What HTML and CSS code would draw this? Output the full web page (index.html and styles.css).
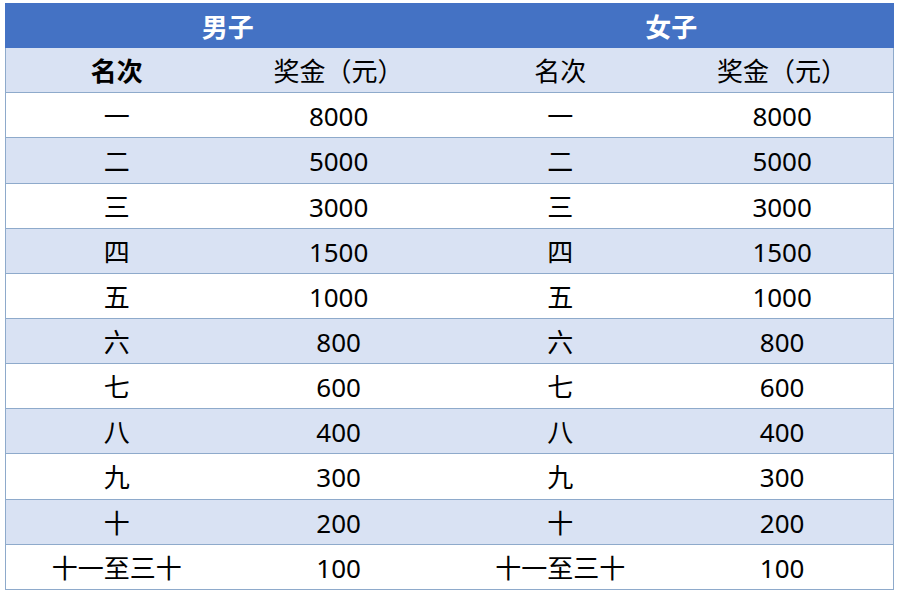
FILE: index.html
```html
<!DOCTYPE html>
<html lang="zh">
<head>
<meta charset="utf-8">
<link rel="stylesheet" href="styles.css">
</head>
<body>
<div class="table">
  <div class="row head">
    <div class="cell span2">男子</div>
    <div class="cell span2">女子</div>
  </div>
  <div class="row sub">
    <div class="cell bold">名次</div>
    <div class="cell">奖金（元）</div>
    <div class="cell">名次</div>
    <div class="cell">奖金（元）</div>
  </div>
  <div class="row"><div class="cell">一</div><div class="cell">8000</div><div class="cell">一</div><div class="cell">8000</div></div>
  <div class="row alt"><div class="cell">二</div><div class="cell">5000</div><div class="cell">二</div><div class="cell">5000</div></div>
  <div class="row"><div class="cell">三</div><div class="cell">3000</div><div class="cell">三</div><div class="cell">3000</div></div>
  <div class="row alt"><div class="cell">四</div><div class="cell">1500</div><div class="cell">四</div><div class="cell">1500</div></div>
  <div class="row"><div class="cell">五</div><div class="cell">1000</div><div class="cell">五</div><div class="cell">1000</div></div>
  <div class="row alt"><div class="cell">六</div><div class="cell">800</div><div class="cell">六</div><div class="cell">800</div></div>
  <div class="row"><div class="cell">七</div><div class="cell">600</div><div class="cell">七</div><div class="cell">600</div></div>
  <div class="row alt"><div class="cell">八</div><div class="cell">400</div><div class="cell">八</div><div class="cell">400</div></div>
  <div class="row"><div class="cell">九</div><div class="cell">300</div><div class="cell">九</div><div class="cell">300</div></div>
  <div class="row alt"><div class="cell">十</div><div class="cell">200</div><div class="cell">十</div><div class="cell">200</div></div>
  <div class="row"><div class="cell">十一至三十</div><div class="cell">100</div><div class="cell">十一至三十</div><div class="cell">100</div></div>
</div>
</body>
</html>
```
FILE: styles.css
```css
html, body {
  margin: 0;
  padding: 0;
  background: #ffffff;
}
.table {
  margin: 3px 0 0 5px;
  width: 889px;
  font-family: "Noto Sans", "Noto Sans CJK SC", sans-serif;
  font-size: 26px;
  color: #000000;
}
.row {
  display: grid;
  grid-template-columns: repeat(4, 1fr);
  height: 45.15px;
  box-sizing: border-box;
  border-left: 1px solid #8eaacb;
  border-right: 1px solid #8eaacb;
  border-bottom: 1px solid #8eaacb;
  background: #ffffff;
}
.row.alt, .row.sub {
  background: #d9e2f3;
}
.row.head {
  background: #4472c4;
  border-color: #4472c4;
  border-bottom: none;
  color: #ffffff;
  font-weight: bold;
}
.cell {
  display: flex;
  align-items: center;
  justify-content: center;
  line-height: 1;
  padding-top: 2px;
}
.span2 {
  grid-column: span 2;
}
.bold {
  font-weight: bold;
}
```
